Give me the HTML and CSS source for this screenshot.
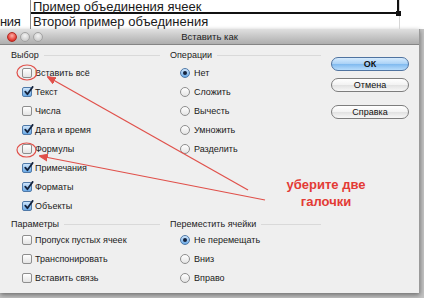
FILE: index.html
```html
<!DOCTYPE html>
<html lang="ru">
<head>
    <meta charset="UTF-8">
    <meta name="viewport" content="width=device-width, initial-scale=1.0">
    <title>Вставить как</title>
    <link rel="stylesheet" href="styles.css">
</head>
<body>
    <div class="sheet">
        <div class="row r1">
            <div class="c0"></div>
            <div class="c1 merged">Пример объединения ячеек<span class="handle"></span></div>
            <div class="c2"></div>
        </div>
        <div class="row r2">
            <div class="c0">ния</div>
            <div class="c1">Второй пример объединения</div>
            <div class="c2"></div>
        </div>
    </div>

    <div class="dialog">
        <div class="titlebar">
            <div class="lights">
                <span class="light red"></span>
                <span class="light"></span>
                <span class="light"></span>
            </div>
            <div class="title">Вставить как</div>
        </div>

        <div class="body">
            <section class="group top">
                <div class="group-label">Выбор</div>
                <label class="item"><span class="box"></span>Вставить всё</label>
                <label class="item"><span class="box on"><svg viewBox="0 0 12 12"><path d="M2.5 6.2l2.3 2.8L10.5 1"/></svg></span>Текст</label>
                <label class="item"><span class="box"></span>Числа</label>
                <label class="item"><span class="box on"><svg viewBox="0 0 12 12"><path d="M2.5 6.2l2.3 2.8L10.5 1"/></svg></span>Дата и время</label>
                <label class="item"><span class="box"></span>Формулы</label>
                <label class="item"><span class="box on"><svg viewBox="0 0 12 12"><path d="M2.5 6.2l2.3 2.8L10.5 1"/></svg></span>Примечания</label>
                <label class="item"><span class="box on"><svg viewBox="0 0 12 12"><path d="M2.5 6.2l2.3 2.8L10.5 1"/></svg></span>Форматы</label>
                <label class="item"><span class="box on"><svg viewBox="0 0 12 12"><path d="M2.5 6.2l2.3 2.8L10.5 1"/></svg></span>Объекты</label>
            </section>

            <section class="group top">
                <div class="group-label">Операции</div>
                <label class="item"><span class="radio on"></span>Нет</label>
                <label class="item"><span class="radio"></span>Сложить</label>
                <label class="item"><span class="radio"></span>Вычесть</label>
                <label class="item"><span class="radio"></span>Умножить</label>
                <label class="item"><span class="radio"></span>Разделить</label>
            </section>

            <div class="buttons">
                <button class="btn default">ОК</button>
                <button class="btn">Отмена</button>
                <button class="btn help">Справка</button>
            </div>

            <section class="group bottom">
                <div class="group-label">Параметры</div>
                <label class="item"><span class="box"></span>Пропуск пустых ячеек</label>
                <label class="item"><span class="box"></span>Транспонировать</label>
                <label class="item"><span class="box"></span>Вставить связь</label>
            </section>

            <section class="group bottom">
                <div class="group-label">Переместить ячейки</div>
                <label class="item"><span class="radio on"></span>Не перемещать</label>
                <label class="item"><span class="radio"></span>Вниз</label>
                <label class="item"><span class="radio"></span>Вправо</label>
            </section>
        </div>
    </div>

    <!-- red annotation drawn over the screenshot -->
    <svg class="notes" viewBox="0 0 424 298">
        <defs>
            <marker id="tip" viewBox="0 0 10 10" refX="9" refY="5" markerWidth="7" markerHeight="7" orient="auto">
                <path d="M0 1L10 5L0 9z" fill="#e0504a"/>
            </marker>
        </defs>
        <ellipse cx="27" cy="72.5" rx="10" ry="7.5"/>
        <ellipse cx="26.5" cy="150" rx="9.5" ry="7"/>
        <line x1="248" y1="190" x2="48" y2="77" marker-end="url(#tip)"/>
        <line x1="265" y1="200" x2="40" y2="156" marker-end="url(#tip)"/>
    </svg>
    <div class="note-text">уберите две<br>галочки</div>
</body>
</html>
```

FILE: styles.css
```css
* {
    margin: 0;
    padding: 0;
    box-sizing: border-box;
}

body {
    width: 424px;
    height: 298px;
    overflow: hidden;
    position: relative;
    background: #c4c4c4;
    font-family: 'Liberation Sans', Arial, sans-serif;
    color: #1a1a1a;
}

/* spreadsheet behind the dialog */
.sheet {
    background: #fff;
}

.row {
    display: flex;
    font-size: 13px;
    white-space: nowrap;
}

.r1 {
    height: 14px;
    line-height: 13px;
}

.r2 {
    height: 15px;
    line-height: 16px;
}

.c0 {
    width: 31px;
    padding-right: 11px;
    text-align: right;
    letter-spacing: -0.4px;
    border-right: 1px solid #8a8a8a;
}

.c1 {
    width: 368px;
    padding-left: 2px;
    position: relative;
}

.c2 {
    flex: 1;
    border-left: 1px solid #d6d6d6;
}

.merged {
    border-bottom: 2px solid #111;
    border-right: 2px solid #111;
}

.handle {
    position: absolute;
    right: -4px;
    bottom: -4px;
    width: 5px;
    height: 5px;
    background: #111;
}

/* dialog */
.dialog {
    width: 420px;
    height: 264px;
    background: #efefef;
    border-right: 1px solid #9a9a9a;
    box-shadow: 0 2px 5px rgba(0, 0, 0, 0.45);
}

.titlebar {
    height: 16px;
    position: relative;
    background: linear-gradient(#e0e0e0, #aeaeae);
    border-bottom: 1px solid #858585;
    display: flex;
    align-items: center;
    justify-content: center;
}

.lights {
    position: absolute;
    left: 7px;
    top: 3px;
    display: flex;
    gap: 3px;
}

.light {
    width: 10px;
    height: 10px;
    border-radius: 50%;
    background: radial-gradient(circle at 50% 35%, #f4f4f4, #bdbdbd);
    border: 1px solid #a3a3a3;
}

.light.red {
    background: radial-gradient(circle at 50% 35%, #ffb0a8, #e0342c 70%);
    border-color: #b02a22;
}

.title {
    font-size: 9.5px;
    color: #222;
}

.body {
    display: grid;
    grid-template-columns: 159px 161px 78px;
    grid-template-rows: 166px auto;
    row-gap: 3px;
    padding: 4px 0 0 11px;
}

.group {
    display: flex;
    flex-direction: column;
    padding-right: 10px;
}

.group-label {
    height: 12px;
    line-height: 12px;
    font-size: 9px;
    color: #222;
    display: flex;
    align-items: center;
    gap: 5px;
}

.group-label::after {
    content: "";
    flex: 1;
    border-top: 1px solid #d9d9d9;
}

.top .group-label {
    margin-bottom: 2px;
}

.item {
    height: 19px;
    display: flex;
    align-items: center;
    gap: 3px;
    padding-left: 11px;
    font-size: 9px;
    color: #1a1a1a;
}

.box {
    width: 10px;
    height: 10px;
    border: 1px solid #8e8e8e;
    border-radius: 2px;
    background: linear-gradient(#ffffff, #e4e4e4);
    position: relative;
}

.box.on {
    background: linear-gradient(#cfe5fb, #6aa9e6);
    border-color: #4f79a8;
}

.box svg {
    position: absolute;
    left: 0;
    top: -2px;
    width: 11px;
    height: 11px;
    fill: none;
    stroke: #14233d;
    stroke-width: 2;
    stroke-linecap: round;
    stroke-linejoin: round;
}

.radio {
    width: 10px;
    height: 10px;
    border-radius: 50%;
    border: 1px solid #8e8e8e;
    background: linear-gradient(#ffffff, #e4e4e4);
    margin-left: -1px;
    margin-right: 1px;
    display: flex;
    align-items: center;
    justify-content: center;
}

.radio.on {
    background: linear-gradient(#cfe5fb, #6aa9e6);
    border-color: #4f79a8;
}

.radio.on::after {
    content: "";
    width: 4px;
    height: 4px;
    border-radius: 50%;
    background: #14233d;
}

.buttons {
    display: flex;
    flex-direction: column;
    padding-top: 8px;
}

.btn {
    height: 14px;
    width: 78px;
    border-radius: 7px;
    border: 1px solid #7d7d7d;
    background: linear-gradient(#ffffff 0%, #f2f2f2 50%, #e1e1e1 51%, #f7f7f7 100%);
    font-family: 'Liberation Sans', Arial, sans-serif;
    font-size: 9px;
    color: #111;
    margin-bottom: 7px;
}

.btn.default {
    background: linear-gradient(#d6ebfd 0%, #a9d1f6 50%, #7fb9ef 51%, #b8dcfb 100%);
    border-color: #4f73a0;
    font-weight: 700;
}

.btn.help {
    margin-top: 6px;
}

/* annotation overlay */
.notes {
    position: absolute;
    left: 0;
    top: 0;
    width: 424px;
    height: 298px;
    pointer-events: none;
    fill: none;
    stroke: #e0504a;
    stroke-width: 1.2;
}

.note-text {
    position: absolute;
    left: 266px;
    top: 176px;
    width: 120px;
    text-align: center;
    font-size: 13px;
    line-height: 17px;
    font-weight: 700;
    color: #e33a35;
}
```
